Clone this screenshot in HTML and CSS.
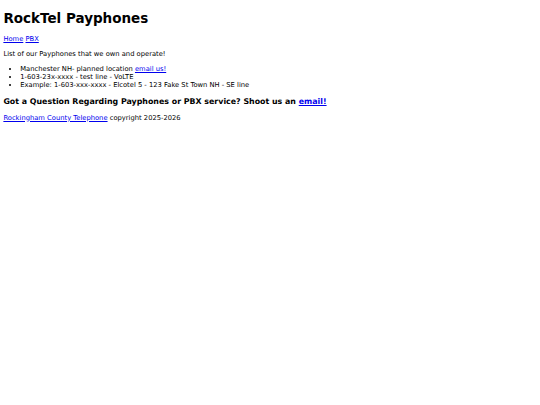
FILE: index.html
```html
<!DOCTYPE html>
<html>
<head>
<meta charset="utf-8">
<title>RockTel Payphones</title>
<link rel="stylesheet" href="styles.css">
</head>
<body>
<h1 class="title">RockTel Payphones</h1>
<nav class="nav"><a href="#">Home</a> <a href="#">PBX</a></nav>
<p class="intro">List of our Payphones that we own and operate!</p>
<ul class="list">
<li>Manchester NH- planned location <a href="#">email us!</a></li>
<li>1-603-23x-xxxx - test line - VoLTE</li>
<li>Example: 1-603-xxx-xxxx - Elcotel 5 - 123 Fake St Town NH - SE line</li>
</ul>
<h3 class="question">Got a Question Regarding Payphones or PBX service? Shoot us an <a href="#">email!</a></h3>
<p class="footer"><a href="#">Rockingham County Telephone</a> copyright 2025-2026</p>
</body>
</html>
```
FILE: styles.css
```css
body {
  margin: 3.375px;
  font-family: "DejaVu Sans", sans-serif;
  font-size: 6.75px;
  color: #000;
  background: #fff;
}
.title {
  font-size: 2em;
  margin: 7px 0 9px;
}
.nav {
  margin: 0;
}
.intro, .footer {
  margin: 1em 0;
}
.list {
  margin: 1em 0;
  padding-left: 16.875px;
}
.question {
  font-size: 1.17em;
  margin: 1em 0;
}
a {
  color: #0000ee;
}
```
